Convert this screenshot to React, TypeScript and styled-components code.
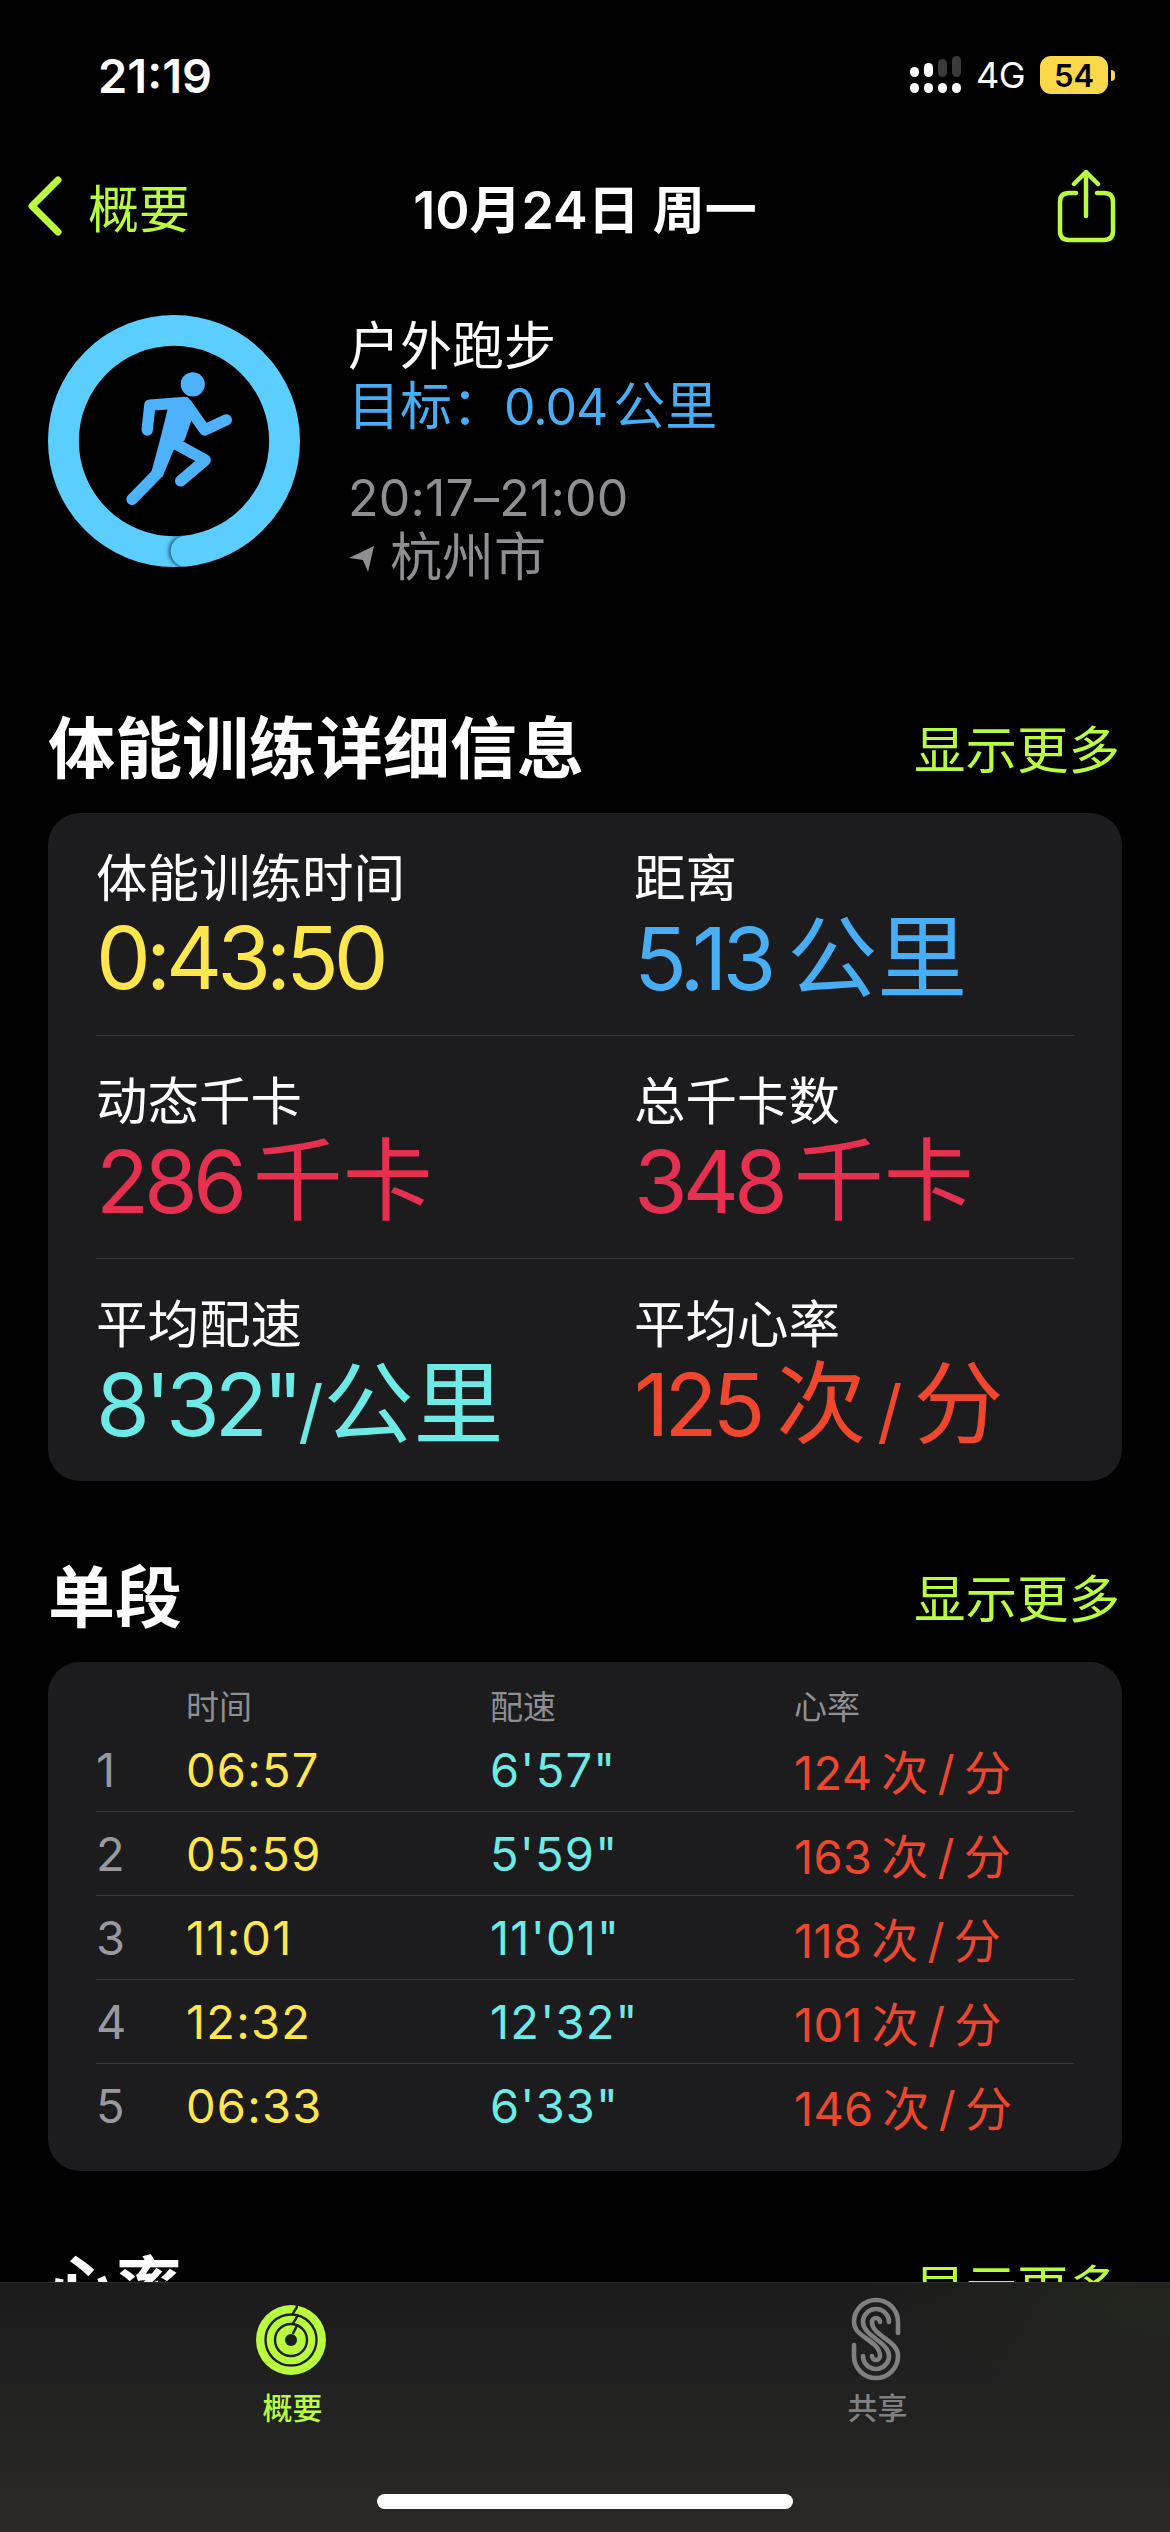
import React from 'react'
import styled, { createGlobalStyle } from 'styled-components'

const colors = {
  lime: '#b8fb3f',
  yellow: '#ffe64c',
  blue: '#47aef5',
  red: '#e6304f',
  cyan: '#6eeae6',
  orange: '#ee472e',
  gray: '#8e8e93',
  card: '#1c1c1e',
  line: '#3a3a3c'
}

const GlobalStyle = createGlobalStyle`
  html, body {
    margin: 0;
    background: #000;
  }
  body {
    font-family: Inter, "Noto Sans CJK SC", sans-serif;
    color: #fff;
  }
`

const Screen = styled.div`
  width: 1170px;
  height: 2532px;
  display: flex;
  flex-direction: column;
  overflow: hidden;
  background: #000;
`
const Scroll = styled.div`
  flex: 1;
  min-height: 0;
  overflow: hidden;
`
const StatusBar = styled.div`
  height: 150px;
  display: flex;
  align-items: center;
  justify-content: space-between;
  padding: 0 55px 0 98px;
`
const Clock = styled.span`
  font-size: 47px;
  font-weight: 600;
`
const StatusRight = styled.div`
  display: flex;
  align-items: center;
`
const Network = styled.span`
  font-size: 36px;
  margin: 0 15px;
  letter-spacing: -0.5px;
`
const Battery = styled.span`
  width: 68px;
  height: 38px;
  border-radius: 11px;
  background: #fbd84a;
  color: #000;
  font-size: 31px;
  font-weight: 600;
  display: flex;
  align-items: center;
  justify-content: center;
`
const BatteryNub = styled.span`
  width: 4px;
  height: 11px;
  margin-left: 3px;
  border-radius: 0 6px 6px 0;
  background: #fbd84a;
`
const Nav = styled.div`
  height: 112px;
  display: grid;
  grid-template-columns: 1fr auto 1fr;
  align-items: center;
  padding: 0 54px;
`
const BackLink = styled.div`
  display: flex;
  align-items: center;
  gap: 24px;
  margin-left: -28px;
  color: ${colors.lime};
  font-size: 51px;
`
const NavTitle = styled.div`
  font-size: 52px;
  font-weight: 600;
`
const NavAction = styled.div`
  display: flex;
  justify-content: flex-end;
  padding-top: 3px;
`
const Hero = styled.div`
  display: flex;
  gap: 48px;
  padding: 53px 48px 0;
  margin-bottom: 118px;
`
const HeroText = styled.div`
  padding-top: 2px;
  font-size: 52px;
  line-height: 60px;
`
const HeroGoal = styled.div`
  color: ${colors.blue};
`
const GoalNumber = styled.span`
  font-size: 50px;
  letter-spacing: -1px;
  margin-right: 6px;
`
const HeroTime = styled.div`
  margin-top: 31px;
  font-size: 50px;
  letter-spacing: 0.2px;
  color: ${colors.gray};
`
const HeroPlace = styled.div`
  display: flex;
  align-items: center;
  gap: 14px;
  color: ${colors.gray};
`
const Section = styled.section`
  margin-bottom: 74px;
`
const SectionHead = styled.div`
  height: 80px;
  margin-bottom: 27px;
  padding: 0 50px 0 48px;
  display: flex;
  align-items: center;
  justify-content: space-between;
`
const SectionTitle = styled.h2`
  margin: 0;
  padding-bottom: 5px;
  font-size: 67px;
  font-weight: 700;
`
const MoreLink = styled.span`
  color: ${colors.lime};
  font-size: 51.5px;
`
const Card = styled.div`
  margin: 0 48px;
  padding: 0 48px;
  border-radius: 32px;
  background: ${colors.card};
`
const MetricRow = styled.div`
  display: grid;
  grid-template-columns: 538px 1fr;
  padding: 35px 0 27px;
  border-bottom: 1px solid ${colors.line};
  &:last-child {
    border-bottom: 0;
  }
`
const MetricLabel = styled.div`
  font-size: 51.5px;
  line-height: 60px;
`
const MetricValue = styled.div<{ $color: string; $gap?: number }>`
  display: flex;
  align-items: baseline;
  gap: ${p => p.$gap ?? 16}px;
  height: 100px;
  line-height: 100px;
  font-size: 87px;
  letter-spacing: -5px;
  white-space: nowrap;
  color: ${p => p.$color};
`
const MetricUnit = styled.span`
  font-size: 90px;
  letter-spacing: 0;
`
const Slash = styled.span`
  font-size: 70px;
  letter-spacing: 0;
  margin: 0 -5px;
`
const SplitHead = styled.div`
  display: grid;
  grid-template-columns: 90px 304px 304px 1fr;
  padding-top: 24px;
  height: 42px;
  line-height: 42px;
  font-size: 33px;
  color: ${colors.gray};
`
const SplitRow = styled.div`
  display: grid;
  grid-template-columns: 90px 304px 304px 1fr;
  align-items: center;
  height: 83px;
  font-size: 47px;
  letter-spacing: 0.3px;
  border-bottom: 1px solid ${colors.line};
  &:last-child {
    border-bottom: 0;
    height: 107px;
    padding-bottom: 24px;
    box-sizing: border-box;
  }
`
const SplitCell = styled.span<{ $color: string }>`
  letter-spacing: 1.2px;
  color: ${p => p.$color};
`
const HeartCell = styled.span`
  display: flex;
  align-items: baseline;
  gap: 9px;
  color: ${colors.orange};
`
const TabBar = styled.div`
  height: 250px;
  box-sizing: border-box;
  border-top: 1px solid #2c2c2c;
  display: flex;
  flex-direction: column;
  align-items: center;
  background:
    radial-gradient(ellipse 300px 120px at 100% 0, rgba(80, 100, 40, 0.14), transparent),
    linear-gradient(180deg, #1b1b1b 0%, #2a2928 100%);
`
const Tabs = styled.div`
  width: 100%;
  display: grid;
  grid-template-columns: 1fr 1fr;
  padding-top: 7px;
`
const Tab = styled.div<{ $color: string }>`
  display: flex;
  flex-direction: column;
  align-items: center;
  color: ${p => p.$color};
  font-size: 30px;
  font-weight: 500;
  line-height: 36px;
`
const HomeIndicator = styled.div`
  width: 416px;
  height: 15px;
  margin-top: 68px;
  border-radius: 8px;
  background: #fff;
`

const SignalIcon = () => (
  <svg width="52" height="38" viewBox="906 56 52 38" fill="#fff">
    <rect x="907" y="83" width="9" height="10" rx="4.5" />
    <rect x="921" y="83" width="9" height="10" rx="4.5" />
    <rect x="935" y="83" width="9" height="10" rx="4.5" />
    <rect x="949" y="83" width="9" height="10" rx="4.5" />
    <rect x="907" y="67" width="9" height="10" rx="4.5" />
    <rect x="921" y="63" width="9" height="14" rx="4.5" />
    <rect x="935" y="59" width="9" height="18" rx="4.5" fill="#3a3a3a" />
    <rect x="949" y="56" width="9" height="21" rx="4.5" fill="#3a3a3a" />
  </svg>
)

const ChevronIcon = () => (
  <svg width="38" height="60" viewBox="0 0 38 60" fill="none" stroke={colors.lime} strokeWidth="7" strokeLinecap="round" strokeLinejoin="round">
    <path d="M32 4 L6 30 L32 56" />
  </svg>
)

const ShareIcon = () => (
  <svg width="60" height="76" viewBox="15 8 60 76" fill="none" stroke={colors.lime} strokeWidth="4.5" strokeLinecap="round" strokeLinejoin="round">
    <path d="M35 31 H28 Q19 31 19 40 V69 Q19 78 28 78 H63 Q72 78 72 69 V40 Q72 31 63 31 H56" />
    <path d="M45 54 V11 M33 22 L45 10 L57 22" />
  </svg>
)

const RingIcon = () => (
  <svg width="252" height="252" viewBox="54 45 752 752">
    <defs>
      <filter id="capBlur" x="-30%" y="-30%" width="160%" height="160%">
        <feGaussianBlur stdDeviation="7" />
      </filter>
      <clipPath id="ringClip">
        <path clipRule="evenodd" d="M54 421 a376 376 0 1 0 752 0 a376 376 0 1 0 -752 0 Z M146 421 a284 284 0 1 0 568 0 a284 284 0 1 0 -568 0 Z" />
      </clipPath>
      <clipPath id="capSide">
        <rect x="380" y="680" width="86" height="130" />
      </clipPath>
    </defs>
    <circle cx="430" cy="421" r="330" fill="none" stroke="#5ccdff" strokeWidth="92" />
    <g clipPath="url(#ringClip)">
      <g clipPath="url(#capSide)">
        <circle cx="462" cy="750" r="46" fill="#0e3a50" filter="url(#capBlur)" />
      </g>
      <circle cx="466" cy="750" r="46" fill="#5ccdff" />
    </g>
    <g fill="none" stroke="#4db2fb" strokeWidth="34" strokeLinecap="round" strokeLinejoin="round">
      <path d="M350 388 L358 314 L462 306" />
      <path d="M468 312 L522 388 L586 358" />
      <path d="M378 520 L305 595" />
      <path d="M440 432 L523 478 L450 540" />
    </g>
    <path fill="#4db2fb" d="M412 322 L470 290 L492 330 L462 418 L428 450 L395 530 L362 515 L385 430 Z" />
    <circle cx="486" cy="252" r="36" fill="#4db2fb" />
  </svg>
)

const PlaceArrow = () => (
  <svg width="28" height="36" viewBox="0 0 28 36" fill={colors.gray}>
    <path d="M1 18 L26 6 L20 32 L15 20 Z" />
  </svg>
)

const SummaryIcon = () => (
  <svg width="100" height="100" viewBox="2 0 100 100">
    <circle cx="50" cy="50" r="35" fill={colors.lime} />
    <g fill="none" stroke="#1f1f1f" strokeWidth="2.4">
      <circle cx="50" cy="50" r="25.5" />
      <circle cx="50" cy="50" r="16" />
      <path d="M56 14 C57 19 52 21 52 24 M56 24 C57 29 52 31 52 34 M56 34 C56 38 53 40 52 44" />
    </g>
    <circle cx="50" cy="50" r="6" fill="#1f1f1f" />
  </svg>
)

const SharingIcon = () => (
  <svg width="90" height="100" viewBox="2 0 90 100" fill="none" stroke="#808080" strokeWidth="4.6" strokeLinecap="round">
    <path d="M67 43 V32 A22 22 0 0 0 23 32 C23 48 49 50 49 66 A4 4 0 0 1 41 66" />
    <path d="M58 32 A13 13 0 0 0 32 32 C32 46 58 52 58 66 A13 13 0 0 1 32 66" />
    <path d="M49 32 A4 4 0 0 0 41 32 C41 46 67 50 67 66 A22 22 0 0 1 23 66 V55" />
  </svg>
)

const splits = [
  { time: '06:57', pace: `6'57"`, heart: '124' },
  { time: '05:59', pace: `5'59"`, heart: '163' },
  { time: '11:01', pace: `11'01"`, heart: '118' },
  { time: '12:32', pace: `12'32"`, heart: '101' },
  { time: '06:33', pace: `6'33"`, heart: '146' }
]

const App = () => (
  <Screen>
    <GlobalStyle />
    <Scroll>
      <StatusBar>
        <Clock>21:19</Clock>
        <StatusRight>
          <SignalIcon />
          <Network>4G</Network>
          <Battery>54</Battery>
          <BatteryNub />
        </StatusRight>
      </StatusBar>
      <Nav>
        <BackLink>
          <ChevronIcon />
          概要
        </BackLink>
        <NavTitle>10月24日 周一</NavTitle>
        <NavAction>
          <ShareIcon />
        </NavAction>
      </Nav>
      <Hero>
        <RingIcon />
        <HeroText>
          <div>户外跑步</div>
          <HeroGoal>目标：<GoalNumber>0.04</GoalNumber>公里</HeroGoal>
          <HeroTime>20:17–21:00</HeroTime>
          <HeroPlace>
            <PlaceArrow />
            杭州市
          </HeroPlace>
        </HeroText>
      </Hero>
      <Section>
        <SectionHead>
          <SectionTitle>体能训练详细信息</SectionTitle>
          <MoreLink>显示更多</MoreLink>
        </SectionHead>
        <Card>
          <MetricRow>
            <div>
              <MetricLabel>体能训练时间</MetricLabel>
              <MetricValue $color={colors.yellow}>0:43:50</MetricValue>
            </div>
            <div>
              <MetricLabel>距离</MetricLabel>
              <MetricValue $color={colors.blue}>5.13<MetricUnit>公里</MetricUnit></MetricValue>
            </div>
          </MetricRow>
          <MetricRow>
            <div>
              <MetricLabel>动态千卡</MetricLabel>
              <MetricValue $color={colors.red} $gap={11}>286<MetricUnit>千卡</MetricUnit></MetricValue>
            </div>
            <div>
              <MetricLabel>总千卡数</MetricLabel>
              <MetricValue $color={colors.red} $gap={11}>348<MetricUnit>千卡</MetricUnit></MetricValue>
            </div>
          </MetricRow>
          <MetricRow>
            <div>
              <MetricLabel>平均配速</MetricLabel>
              <MetricValue $color={colors.cyan} $gap={5}>8'32"<Slash>/</Slash><MetricUnit>公里</MetricUnit></MetricValue>
            </div>
            <div>
              <MetricLabel>平均心率</MetricLabel>
              <MetricValue $color={colors.orange}>125<MetricUnit>次</MetricUnit><Slash>/</Slash><MetricUnit>分</MetricUnit></MetricValue>
            </div>
          </MetricRow>
        </Card>
      </Section>
      <Section>
        <SectionHead>
          <SectionTitle>单段</SectionTitle>
          <MoreLink>显示更多</MoreLink>
        </SectionHead>
        <Card>
          <SplitHead>
            <span />
            <span>时间</span>
            <span>配速</span>
            <span>心率</span>
          </SplitHead>
          {splits.map((split, index) => (
            <SplitRow key={index}>
              <SplitCell $color="#98989e">{index + 1}</SplitCell>
              <SplitCell $color={colors.yellow}>{split.time}</SplitCell>
              <SplitCell $color={colors.cyan}>{split.pace}</SplitCell>
              <HeartCell>
                {split.heart}<span>次</span><span>/</span><span>分</span>
              </HeartCell>
            </SplitRow>
          ))}
        </Card>
      </Section>
      <Section>
        <SectionHead>
          <SectionTitle>心率</SectionTitle>
          <MoreLink>显示更多</MoreLink>
        </SectionHead>
      </Section>
    </Scroll>
    <TabBar>
      <Tabs>
        <Tab $color={colors.lime}>
          <SummaryIcon />
          概要
        </Tab>
        <Tab $color="#808080">
          <SharingIcon />
          共享
        </Tab>
      </Tabs>
      <HomeIndicator />
    </TabBar>
  </Screen>
)

export default App
